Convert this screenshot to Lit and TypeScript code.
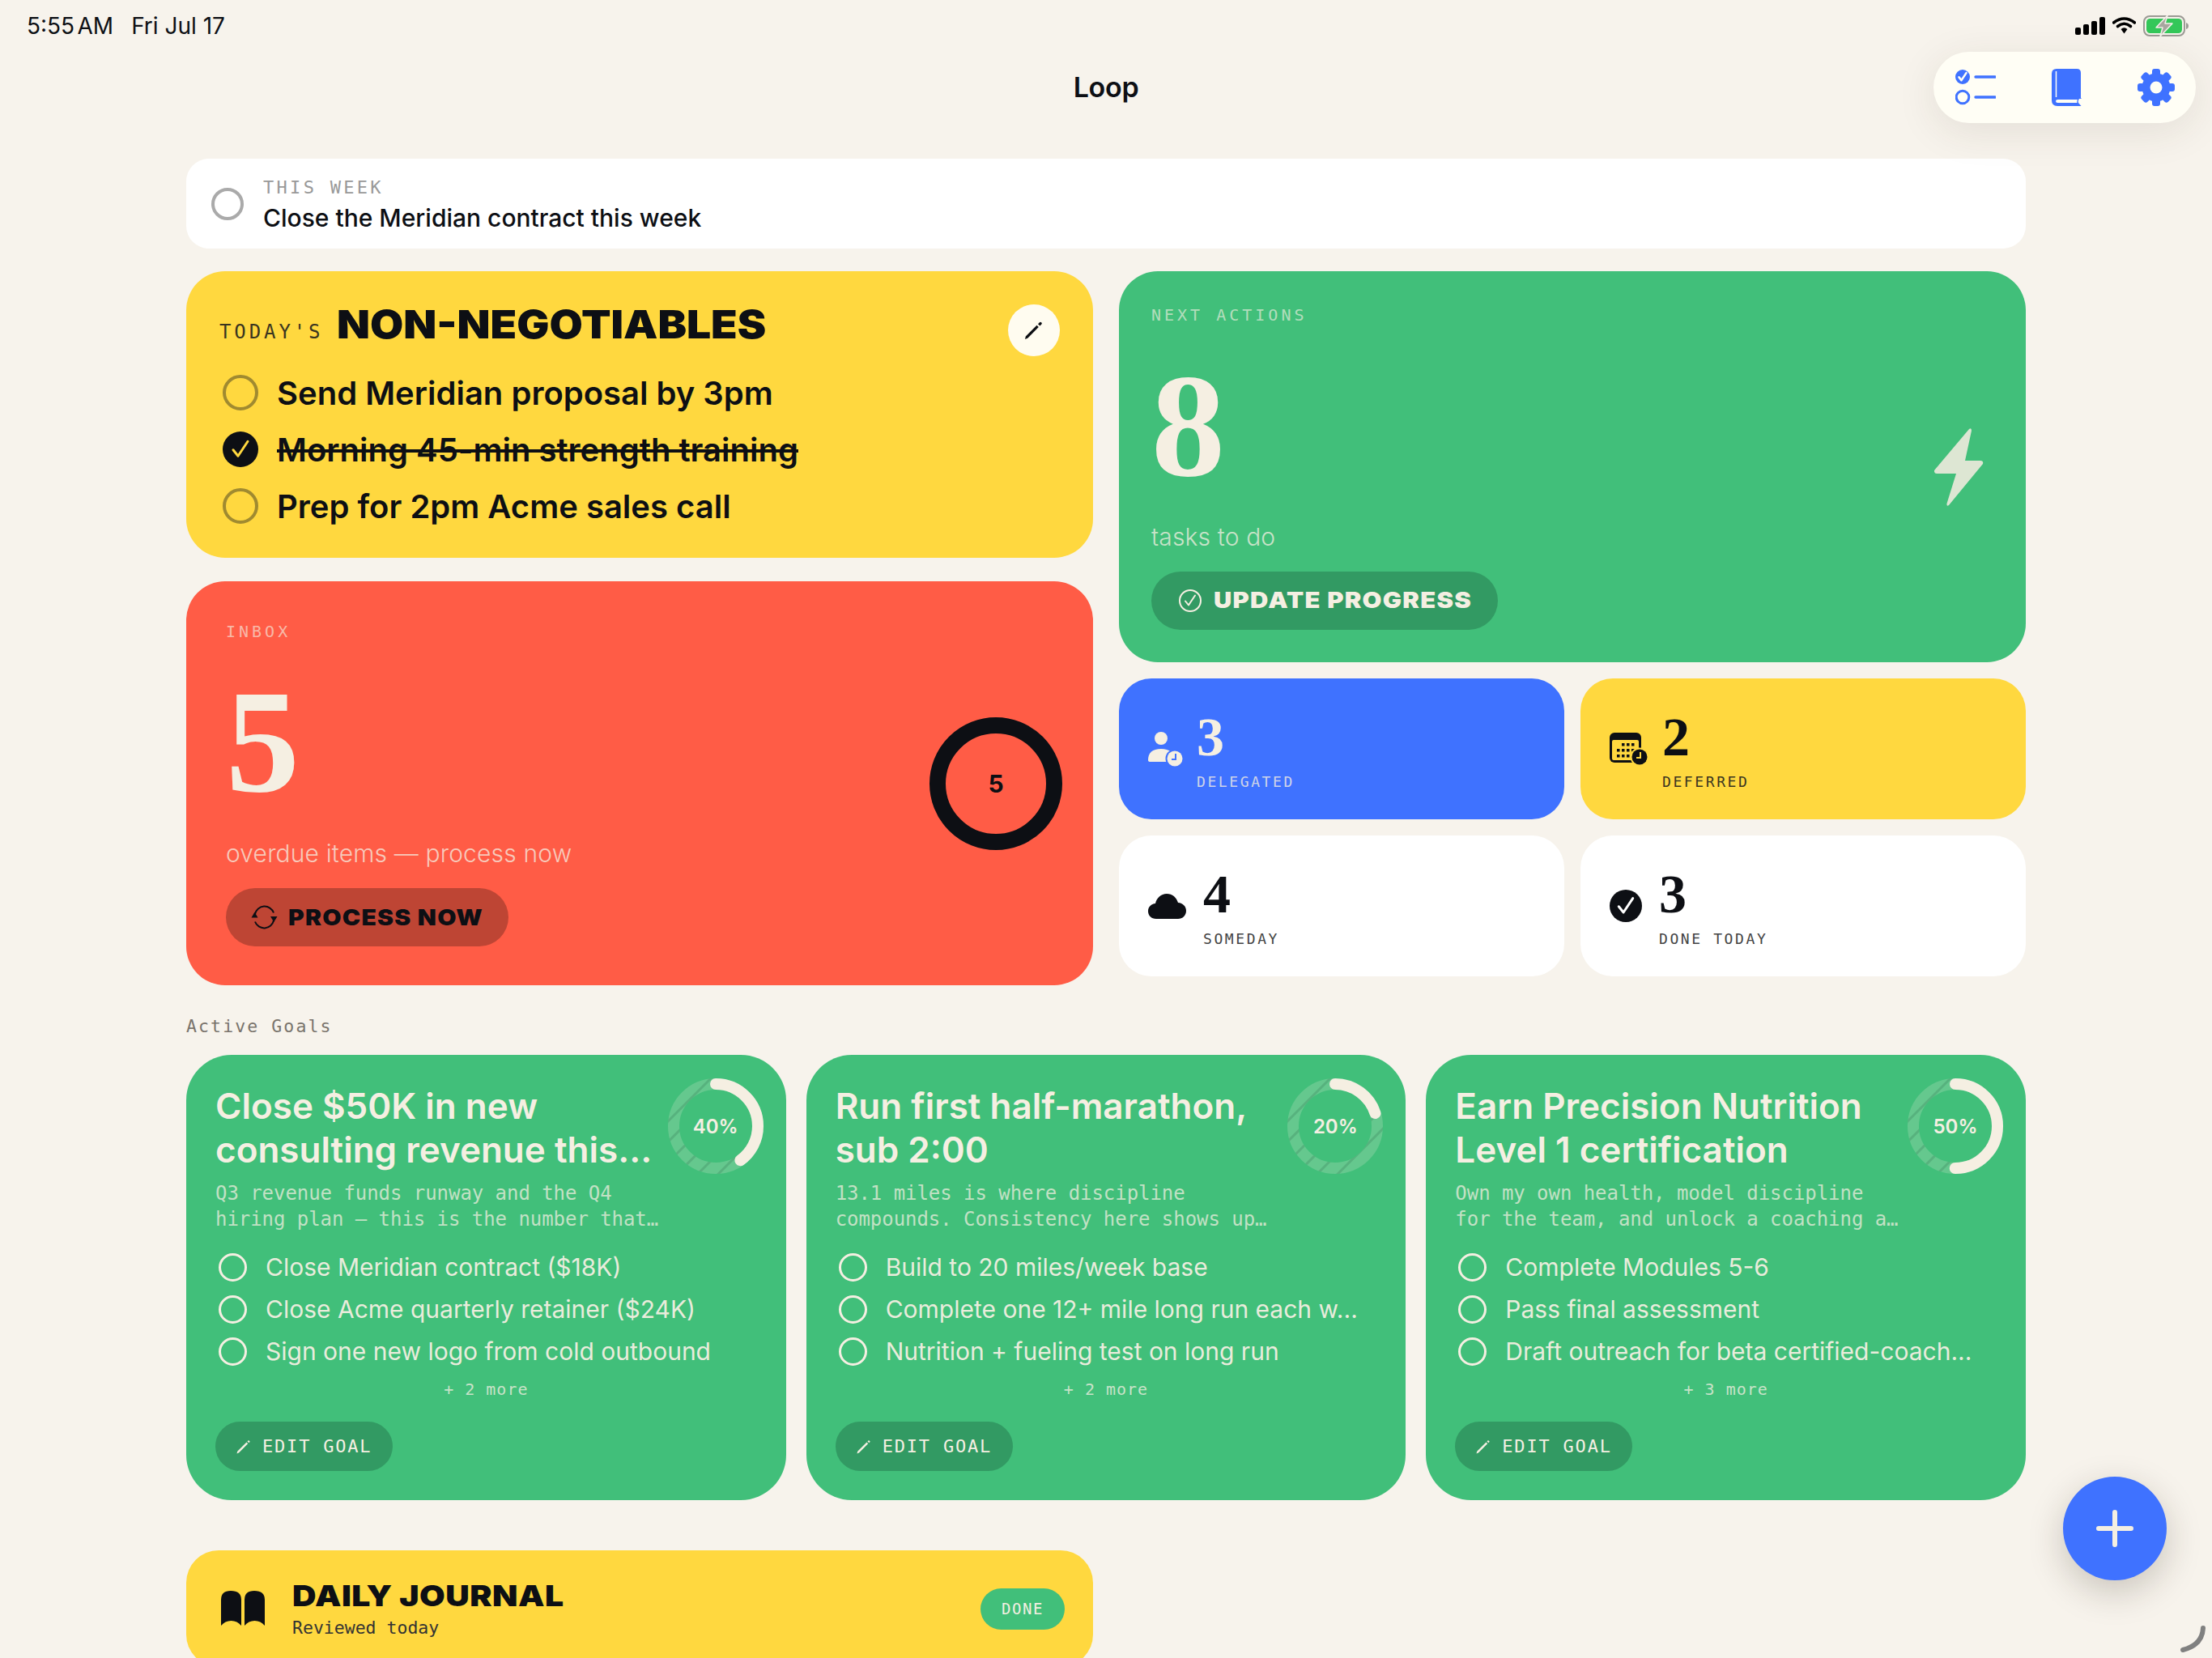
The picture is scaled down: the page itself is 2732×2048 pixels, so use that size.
import { LitElement, html, css, svg } from "lit";
import { customElement } from "lit/decorators.js";

const CREAM = "#F5EFE2";
const DARK = "#0D0F14";
const BLUE = "#3F72FF";

const check = (color: string, w = 3, s = 1) => svg`<g transform="scale(${s})"><path d="M-6 0.5 L-2 5.5 L6 -6.5" fill="none" stroke=${color} stroke-width=${w / s} stroke-linecap="round" stroke-linejoin="round"/></g>`;

const pencil = html`<svg width="24" height="24" viewBox="0 0 24 24"><path d="M1 23 L1.8 19.5 L15.5 5.8 L17.8 8.1 L4.2 21.8 Z M17 4.2 L19 2.2 Q20 1.4 21 2.2 L21.4 2.6 Q22.2 3.6 21.4 4.6 L19.4 6.6 Z" fill=${DARK}/></svg>`;

const thinPencil = html`<svg class="pen" width="18" height="18" viewBox="0 0 18 18"><path d="M0.5 17.5 L1.2 14.8 L12.5 3.5 L14.2 5.2 L3 16.6 Z M13.5 2.5 L15 1 L16.8 2.7 L15.3 4.2 Z" fill=${CREAM}/></svg>`;

const listIcon = html`<svg width="50" height="46" viewBox="0 0 50 46">
  <circle cx="9" cy="10" r="9" fill=${BLUE}/>
  ${svg`<g transform="translate(9 10)">${check("#FFFEF5", 2.6, 0.75)}</g>`}
  <circle cx="9" cy="35" r="7.8" fill="none" stroke=${BLUE} stroke-width="3"/>
  <path d="M25 10 H49 M25 35 H49" stroke=${BLUE} stroke-width="3.4" stroke-linecap="round"/>
</svg>`;

const bookIcon = html`<svg width="37" height="46" viewBox="0 0 37 46">
  <path d="M6 0 H31 Q36 0 36 5 V36 L37 37 H34 Q32 39.5 33 42 L36.5 46 H7 Q0 46 0 39 V6 Q0 0 6 0 Z" fill=${BLUE}/>
  <path d="M5.5 3 V35" stroke="#FFFEF5" stroke-width="1.5"/>
  <path d="M7.5 38 H32 Q31 40 31.5 42 H7.5 Q5 42 5 40 Q5 38 7.5 38 Z" fill="#FFFEF5"/>
</svg>`;

const gearIcon = html`<svg width="46" height="46" viewBox="-23 -23 46 46">
  <circle r="17.5" fill=${BLUE}/>
  ${[0, 45, 90, 135, 180, 225, 270, 315].map(a => svg`<rect x="-5" y="-23" width="10" height="12" rx="3" fill=${BLUE} transform="rotate(${a})"/>`)}
  <circle r="7.5" fill="#FFFEF5"/>
</svg>`;

const signal = html`<svg width="37" height="22" viewBox="0 0 37 22">
  <rect x="0" y="13" width="7" height="9" rx="2" fill="#000"/>
  <rect x="10" y="9" width="7" height="13" rx="2" fill="#000"/>
  <rect x="20" y="5" width="7" height="17" rx="2" fill="#000"/>
  <rect x="30" y="0" width="7" height="22" rx="2" fill="#000"/>
</svg>`;
const wifi = html`<svg width="29" height="21" viewBox="0 0 29 21">
  <path d="M1.5 7 Q14.5 -3 27.5 7" fill="none" stroke="#000" stroke-width="3.6" stroke-linecap="round"/>
  <path d="M6.5 11.5 Q14.5 5 22.5 11.5" fill="none" stroke="#000" stroke-width="3.6" stroke-linecap="round"/>
  <path d="M10.5 15 Q14.5 11.5 18.5 15 L14.5 20.5 Z" fill="#000"/>
</svg>`;
const battery = html`<svg width="56" height="28" viewBox="0 0 56 28">
  <rect x="1" y="2" width="50" height="24" rx="7" fill="none" stroke="#9b9a94" stroke-width="2"/>
  <rect x="4" y="5" width="44" height="18" rx="4.5" fill="#34C759"/>
  <path d="M53 10 Q56 11 56 14 Q56 17 53 18 Z" fill="#9b9a94"/>
  <path d="M30 1 L16 16 H24 L21 27 L36 11 H27 Z" fill="#a8a69f" stroke="#F5F1EA" stroke-width="1.5" stroke-linejoin="round"/>
</svg>`;

const boltBig = html`<svg width="61" height="97" viewBox="0 0 61 97"><path d="M43 1 Q46 -1 46 3 L38 40 H57 Q61 40 60 44 L18 95 Q15 97 15.5 93 L27 56 H3 Q-0.5 56 0 52 Z" fill="#DDE6D3"/></svg>`;

const refresh = html`<svg class="ico" width="33" height="30" viewBox="0 0 33 30">
  <path d="M5 11 A12 12 0 0 1 28 9.5 M28 19 A12 12 0 0 1 5 20.5" fill="none" stroke=${DARK} stroke-width="2"/>
  <path d="M0.5 15.5 H8.5 L4.5 8.5 Z M24 14 H32.5 L28.3 21 Z" fill=${DARK}/>
</svg>`;

const circleCheck = html`<svg class="ico" width="28" height="28" viewBox="-14 -14 28 28">
  <circle r="13" fill="none" stroke=${CREAM} stroke-width="2"/>
  ${check(CREAM, 2)}
</svg>`;

const personClock = html`<svg width="43" height="43" viewBox="0 0 43 43">
  <circle cx="16" cy="8" r="8" fill=${CREAM}/>
  <path d="M0 35 Q0 21 16 21 Q32 21 32 35 Q32 37 29 37 H3 Q0 37 0 35 Z" fill=${CREAM}/>
  <circle cx="33" cy="33" r="11.5" fill=${BLUE}/>
  <circle cx="33" cy="33" r="9.5" fill=${CREAM}/>
  <path d="M34 27 V34 H29" fill="none" stroke=${BLUE} stroke-width="2"/>
</svg>`;

const calClock = html`<svg width="48" height="41" viewBox="0 0 48 41">
  <rect x="0" y="0" width="39" height="37" rx="6" fill=${DARK}/>
  <rect x="3" y="9" width="33" height="25" rx="2" fill="#FFD83F"/>
  ${[[15,13],[21,13],[27,13],[9,20],[15,20],[21,20],[27,20],[9,27],[15,27],[21,27]].map(([x,y]) => svg`<rect x=${x} y=${y} width="3.5" height="3.5" fill=${DARK}/>`)}
  <circle cx="37" cy="30" r="11.5" fill="#FFD83F"/>
  <circle cx="37" cy="30" r="9.5" fill=${DARK}/>
  <path d="M38 24 V31 H33" fill="none" stroke="#FFD83F" stroke-width="2"/>
</svg>`;

const cloud = html`<svg width="47" height="31" viewBox="0 0 47 31"><path d="M10 31 C4 31 0 27 0 21.5 C0 16 4 12.5 9 12 C10.5 5 16 0 23 0 C30 0 35 4.5 37 11 C43 11.5 47 15.5 47 21 C47 27 42.5 31 37 31 Z" fill=${DARK}/></svg>`;

const doneCircle = html`<svg width="40" height="40" viewBox="-20 -20 40 40"><circle r="20" fill=${DARK}/>${check("#fff", 3, 1.45)}</svg>`;

const journalBook = html`<svg width="54" height="44" viewBox="0 0 54 44">
  <path d="M0 11 Q0 0 12 0 Q25 0 25 11 V43 Q20 37 12.5 37 Q5 37 0 43 Z" fill=${DARK}/>
  <path d="M29 11 Q29 0 41 0 Q54 0 54 11 V43 Q49 37 41.5 37 Q34 37 29 43 Z" fill=${DARK}/>
</svg>`;

function progressRing(pct: number, id: string) {
  const r = 52;
  const c = 2 * Math.PI * r;
  return html`<svg class="goal-ring" width="118" height="118" viewBox="0 0 118 118">
    <defs><pattern id=${id} width="18" height="18" patternUnits="userSpaceOnUse" patternTransform="rotate(45)">
      <rect x="0" y="0" width="3" height="18" fill="rgba(30,90,60,.2)"/>
    </pattern></defs>
    <circle cx="59" cy="59" r=${r} fill="none" stroke="rgba(245,239,226,.2)" stroke-width="14"/>
    <circle cx="59" cy="59" r=${r} fill="none" stroke="url(#${id})" stroke-width="14"/>
    <circle cx="59" cy="59" r=${r} fill="none" stroke=${CREAM} stroke-width="14" stroke-linecap="round"
      stroke-dasharray="${(c * pct) / 100} ${c}" transform="rotate(-90 59 59)"/>
  </svg>`;
}

const goals = [
  { pct: 40, title: ["Close $50K in new", "consulting revenue this..."], desc: ["Q3 revenue funds runway and the Q4", "hiring plan — this is the number that…"],
    items: ["Close Meridian contract ($18K)", "Close Acme quarterly retainer ($24K)", "Sign one new logo from cold outbound"], more: "+ 2 more" },
  { pct: 20, title: ["Run first half-marathon,", "sub 2:00"], desc: ["13.1 miles is where discipline", "compounds. Consistency here shows up…"],
    items: ["Build to 20 miles/week base", "Complete one 12+ mile long run each w...", "Nutrition + fueling test on long run"], more: "+ 2 more" },
  { pct: 50, title: ["Earn Precision Nutrition", "Level 1 certification"], desc: ["Own my own health, model discipline", "for the team, and unlock a coaching a…"],
    items: ["Complete Modules 5-6", "Pass final assessment", "Draft outreach for beta certified-coach..."], more: "+ 3 more" },
];

@customElement("app-root")
export class AppRoot extends LitElement {
  static styles = css`
    :host { display: block; }
    * { box-sizing: border-box; }
    .page { position: relative; width: 2732px; height: 2048px; overflow: hidden; background: #F7F3EC; color: #0D0F14;
      font-family: Inter, "Liberation Sans", sans-serif; }
    .top { height: 196px; }
    .status { display: flex; justify-content: space-between; align-items: center; height: 64px; padding: 0 29px 0 33px; }
    .clock { display: flex; gap: 22px; font-size: 28px; margin-top: -1px; }
    .clock .t { word-spacing: -4.5px; }
    .sys { display: flex; align-items: center; gap: 9px; margin-top: -1px; }
    .title { text-align: center; font-size: 34px; font-weight: 600; line-height: 44px; margin-top: 22px; letter-spacing: -0.3px; }
    .nav { position: absolute; left: 2388px; top: 64px; width: 324px; height: 88px; border-radius: 44px; background: #FFFEF5;
      box-shadow: 0 10px 50px rgba(60,50,30,.10); display: flex; align-items: center; justify-content: space-between; padding: 0 26px 0 27px; }
    main { padding: 0 230px; }
    .week { height: 111px; background: #fff; border-radius: 28px; display: flex; align-items: center; gap: 24px; padding: 0 31px; }
    .week .c { width: 40px; height: 40px; border-radius: 50%; border: 4px solid #aaa; flex: none; }
    .week .wb { margin-top: 3px; }
    .mono { font-family: "DejaVu Sans Mono", "Liberation Mono", monospace; }
    .week .wl { font-size: 22px; letter-spacing: 3.3px; color: #999; line-height: 28px; }
    .week .txt { font-size: 30px; font-weight: 500; line-height: 40px; margin-top: 3px; }
    .cols { display: grid; grid-template-columns: 1120px 1120px; gap: 32px; margin-top: 28px; align-items: start; }
    .stack { display: flex; flex-direction: column; gap: 29px; }
    .rstack { display: flex; flex-direction: column; gap: 20px; }
    .card { border-radius: 48px; }
    .yellow { background: #FFD83F; }
    .green { background: #41BF7A; }
    .red { background: #FF5C46; }
    .blue { background: #3F72FF; }
    .white { background: #fff; }
    .nn { height: 354px; padding: 41px 41px 0; }
    .nn-head { display: flex; justify-content: space-between; align-items: flex-start; height: 64px; }
    .nn-title { display: flex; align-items: baseline; gap: 17px; line-height: 50px; }
    .nn-title .t { font-size: 24px; letter-spacing: 3.9px; color: #3a3520; }
    .heavy { font-weight: 900; display: inline-block; transform-origin: left center; }
    .nn-title .h { font-size: 48px; transform: scaleX(1.11); }
    .pen-btn { width: 64px; height: 64px; border-radius: 50%; background: #FFFCF0; display: flex; align-items: center; justify-content: center; }
    .nn-list { margin-top: 10px; padding-left: 4px; }
    .nn-row { height: 70px; display: flex; align-items: center; gap: 23px; font-size: 40px; font-weight: 600; }
    .nn-row .c { width: 44px; height: 44px; border-radius: 50%; border: 4px solid #A08A30; flex: none; }
    .nn-row .c.on { border: none; background: #0D0F14; display: flex; align-items: center; justify-content: center; }
    .nn-row .s { text-decoration: line-through; text-decoration-thickness: 4px; }
    .inbox { height: 499px; padding: 50px 38px 48px 49px; display: flex; justify-content: space-between; align-items: center; }
    .next { height: 483px; padding: 42px 52px 41px 40px; display: flex; justify-content: space-between; align-items: center; }
    .col { display: flex; flex-direction: column; align-items: flex-start; }
    .lab { font-size: 20px; letter-spacing: 4px; line-height: 24px; color: rgba(245,239,226,.65); }
    .num { font-family: "Liberation Serif", serif; font-weight: 700; font-size: 182px; line-height: 200px; color: #F5EFE2; }
    .inbox .num { margin-top: 24px; }
    .next .num { margin-top: 25px; }
    .sub { font-size: 30px; font-weight: 300; line-height: 40px; letter-spacing: 0.15px; color: rgba(245,239,226,.75); }
    .inbox .sub { margin-top: 18px; }
    .next .sub { margin-top: 17px; }
    .btn { display: inline-flex; align-items: center; height: 72px; border-radius: 36px; font-size: 27px; font-weight: 900; letter-spacing: 1.1px; }
    .inbox .btn { background: #BE4534; color: #0D0F14; margin-top: 23px; width: 349px; padding-left: 31px; gap: 13px; }
    .next .btn { background: #329A63; color: #F5EFE2; margin-top: 23px; width: 428px; padding-left: 34px; gap: 15px; }
    .inbox .btn .heavy { transform: scaleX(1.113); }
    .next .btn .heavy { transform: scaleX(1.144); }
    .ring { width: 164px; height: 164px; border-radius: 50%; border: 20px solid #0D0F14; display: flex; align-items: center; justify-content: center; font-size: 30px; font-weight: 700; margin-top: -2px; }
    .tiles { display: grid; grid-template-columns: 1fr 1fr; gap: 20px; }
    .tile { height: 174px; border-radius: 40px; display: flex; align-items: center; padding: 0 36px; gap: 17px; }
    .tile.white { gap: 21px; }
    .tnum { font-family: "Liberation Serif", serif; font-weight: 700; font-size: 68px; line-height: 60px; margin-top: 7px; }
    .tlab { font-size: 18px; letter-spacing: 2.6px; line-height: 22px; margin-top: 15px; }
    .blue .tnum { color: #F5EFE2; }
    .blue .tlab { color: rgba(245,239,226,.8); }
    .yellow .tlab { color: #3a3520; }
    .white .tlab { color: #444; }
    .section { font-size: 21.5px; letter-spacing: 2.1px; color: #7a746c; line-height: 28px; margin-top: 37px; }
    .goals { display: grid; grid-template-columns: repeat(3, 1fr); gap: 25px; margin-top: 21px; }
    .goal { position: relative; height: 550px; border-radius: 56px; background: #41BF7A; color: #F5EFE2; padding: 36px 28px 36px 36px; display: flex; flex-direction: column; }
    .goal-ring { position: absolute; right: 28px; top: 29px; }
    .pct { position: absolute; right: 28px; top: 29px; width: 118px; height: 118px; display: flex; align-items: center; justify-content: center; font-size: 24px; font-weight: 600; }
    .gt { font-size: 44px; font-weight: 600; line-height: 54px; white-space: nowrap; }
    .gd { margin-top: 11px; font-size: 24px; line-height: 32px; color: rgba(245,239,226,.72); white-space: nowrap; letter-spacing: -0.05px; }
    .gl { margin-top: 17px; padding-left: 4px; }
    .gr { height: 52px; display: flex; align-items: center; gap: 23px; font-size: 30px; font-weight: 400; color: rgba(245,239,226,.95); white-space: nowrap; }
    .gr .c { width: 35px; height: 35px; border-radius: 50%; border: 3px solid #F5EFE2; flex: none; }
    .more { text-align: center; font-size: 20px; letter-spacing: 1px; line-height: 28px; color: rgba(245,239,226,.75); margin-top: 7px; padding-right: 8px; }
    .edit { margin-top: auto; align-self: flex-start; height: 61px; width: 219px; border-radius: 31px; background: #329A63; display: flex; align-items: center; gap: 14px; padding-left: 26px; font-size: 22px; letter-spacing: 1.8px; }
    .journal { width: 1120px; height: 144px; margin-top: 62px; border-radius: 40px; display: flex; align-items: center; padding: 0 35px 0 43px; gap: 34px; }
    .journal .jt { font-size: 36px; line-height: 44px; letter-spacing: 0.4px; transform: scaleX(1.136); }
    .journal .js { font-size: 21.5px; line-height: 30px; margin-top: 3px; color: #333; }
    .journal .grow { flex: 1; }
    .pill { width: 104px; height: 51px; border-radius: 26px; background: #41BF7A; color: #F5EFE2; display: flex; align-items: center; justify-content: center; font-size: 19px; letter-spacing: 1.6px; }
    .fab { position: absolute; left: 2548px; top: 1824px; width: 128px; height: 128px; border-radius: 50%; background: #3F72FF; box-shadow: 0 14px 44px rgba(40,30,20,.22); display: flex; align-items: center; justify-content: center; }
    .corner { position: absolute; left: 2690px; top: 2005px; }
  `;

  render() {
    return html`<div class="page">
      <div class="top">
        <div class="status">
          <div class="clock"><span class="t">5:55 AM</span><span>Fri Jul 17</span></div>
          <div class="sys">${signal}${wifi}${battery}</div>
        </div>
        <div class="title">Loop</div>
      </div>
      <div class="nav">${listIcon}${bookIcon}${gearIcon}</div>
      <main>
        <div class="week">
          <div class="c"></div>
          <div class="wb"><div class="wl mono">THIS WEEK</div><div class="txt">Close the Meridian contract this week</div></div>
        </div>
        <div class="cols">
          <div class="stack">
            <div class="card yellow nn">
              <div class="nn-head">
                <div class="nn-title"><span class="t mono">TODAY'S</span><span class="h heavy">NON-NEGOTIABLES</span></div>
                <div class="pen-btn">${pencil}</div>
              </div>
              <div class="nn-list">
                <div class="nn-row"><div class="c"></div><span>Send Meridian proposal by 3pm</span></div>
                <div class="nn-row"><div class="c on"><svg width="44" height="44" viewBox="-22 -22 44 44">${check("#FFD83F", 3, 1.5)}</svg></div><span class="s">Morning 45-min strength training</span></div>
                <div class="nn-row"><div class="c"></div><span>Prep for 2pm Acme sales call</span></div>
              </div>
            </div>
            <div class="card red inbox">
              <div class="col">
                <div class="lab mono">INBOX</div>
                <div class="num">5</div>
                <div class="sub">overdue items — process now</div>
                <div class="btn">${refresh}<span class="heavy">PROCESS NOW</span></div>
              </div>
              <div class="ring">5</div>
            </div>
          </div>
          <div class="rstack">
            <div class="card green next">
              <div class="col">
                <div class="lab mono">NEXT ACTIONS</div>
                <div class="num">8</div>
                <div class="sub">tasks to do</div>
                <div class="btn">${circleCheck}<span class="heavy">UPDATE PROGRESS</span></div>
              </div>
              ${boltBig}
            </div>
            <div class="tiles">
              ${this.tile("blue", personClock, "3", "DELEGATED")}
              ${this.tile("yellow", calClock, "2", "DEFERRED")}
              ${this.tile("white", cloud, "4", "SOMEDAY")}
              ${this.tile("white", doneCircle, "3", "DONE TODAY")}
            </div>
          </div>
        </div>
        <div class="section mono">Active Goals</div>
        <div class="goals">
          ${goals.map((g, i) => html`<div class="goal">
            ${progressRing(g.pct, "h" + i)}
            <div class="pct">${g.pct}%</div>
            <div class="gt">${g.title.map(l => html`<div>${l}</div>`)}</div>
            <div class="gd mono">${g.desc.map(l => html`<div>${l}</div>`)}</div>
            <div class="gl">${g.items.map(t => html`<div class="gr"><div class="c"></div><span>${t}</span></div>`)}</div>
            <div class="more mono">${g.more}</div>
            <div class="edit mono">${thinPencil}<span>EDIT GOAL</span></div>
          </div>`)}
        </div>
        <div class="journal yellow">
          ${journalBook}
          <div class="grow"><div class="jt heavy">DAILY JOURNAL</div><div class="js mono">Reviewed today</div></div>
          <div class="pill mono">DONE</div>
        </div>
      </main>
      <div class="fab"><svg width="48" height="48" viewBox="0 0 48 48"><path d="M24 4 V44 M4 24 H44" stroke=${CREAM} stroke-width="6" stroke-linecap="round"/></svg></div>
      <svg class="corner" width="40" height="40" viewBox="0 0 40 40"><path d="M31 6 Q30 27 6 33" fill="none" stroke="#808080" stroke-width="6" stroke-linecap="round"/></svg>
    </div>`;
  }

  tile(color: string, icon: unknown, n: string, label: string) {
    return html`<div class="tile ${color}">
      ${icon}
      <div class="col"><div class="tnum">${n}</div><div class="tlab mono">${label}</div></div>
    </div>`;
  }
}
